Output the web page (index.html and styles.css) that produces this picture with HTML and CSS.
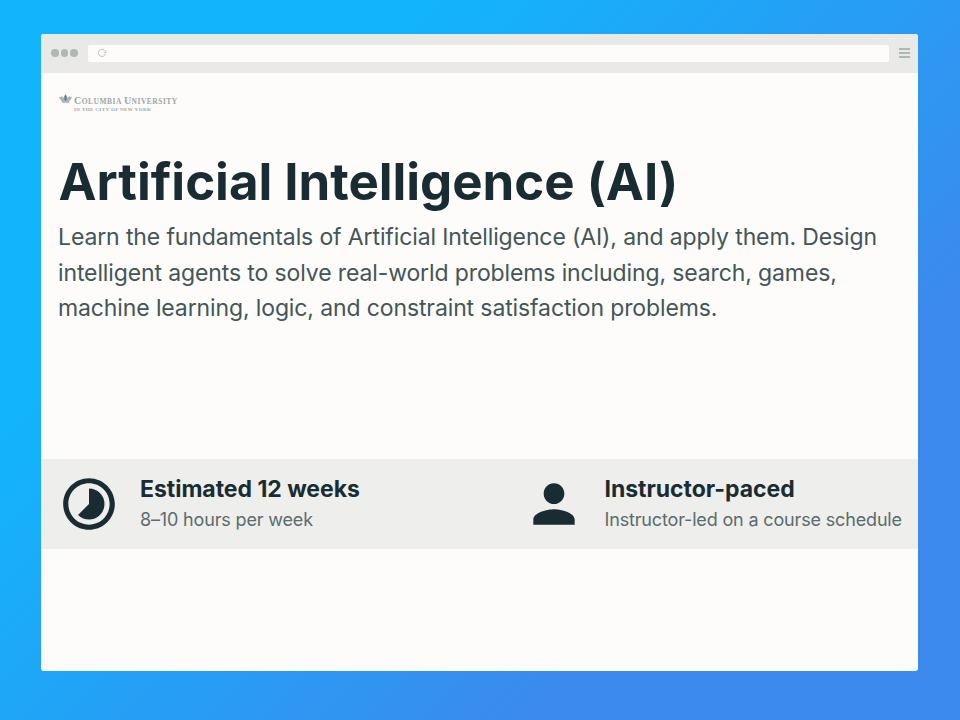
FILE: index.html
```html
<!DOCTYPE html>
<html lang="en">
<head>
<meta charset="utf-8">
<title>Artificial Intelligence (AI)</title>
<link rel="stylesheet" href="styles.css">
</head>
<body>
<main class="window">
  <header class="toolbar">
    <div class="dots"><i></i><i></i><i></i></div>
    <div class="address">
      <svg class="reload" viewBox="0 0 10 10"><path d="M7.600 2.300A3.600 3.600 0 1 0 8.500 5.800M8.800 2.600v2H6.800"/></svg>
    </div>
    <div class="menu"><i></i><i></i><i></i></div>
  </header>
  <section class="hero">
    <div class="brand">
      <svg class="crown" viewBox="0 0 14 11"><path class="crown-side" d="M0 2.500l2 .3.8-1 1.700 1.700L6 2h2l1.500 1.500L11.200 1.800l.8 1 2-.3-1 2.500-1.500 1.500L10.500 9h-7L2.500 6.500 1 5z"/><path class="crown-mid" d="M6.500 0h1v1.500h1v1h-1L8.500 5 7 7 5.500 5l1-2.500h-1v-1h1z"/></svg>
      <div class="brand-text">
        <div class="brand-name"><b>C</b>OLUMBIA <b>U</b>NIVERSITY</div>
        <div class="brand-city">IN THE CITY OF NEW YORK</div>
      </div>
    </div>
    <h1 class="title">Artificial Intelligence (AI)</h1>
    <p class="lead"><span class="line">Learn the fundamentals of Artificial Intelligence (AI), and apply them. Design</span> <span class="line">intelligent agents to solve real-world problems including, search, games,</span> <span class="line">machine learning, logic, and constraint satisfaction problems.</span></p>
  </section>
  <section class="facts">
    <div class="fact">
      <svg class="icon" viewBox="0 0 24 24"><path d="M16.240 7.750A5.974 5.974 0 0 0 12 5.990v6l-4.240 4.240c2.340 2.340 6.140 2.340 8.490 0a5.990 5.990 0 0 0-.01-8.480zM12 1.990c-5.520 0-10 4.480-10 10s4.480 10 10 10 10-4.480 10-10-4.480-10-10-10zm0 18c-4.420 0-8-3.580-8-8s3.580-8 8-8 8 3.580 8 8-3.580 8-8 8z"/></svg>
      <div><h2 class="fact-title">Estimated 12 weeks</h2><p class="fact-note">8–10 hours per week</p></div>
    </div>
    <div class="fact">
      <svg class="icon" viewBox="0 0 24 24"><path d="M12 12c2.210 0 4-1.790 4-4s-1.790-4-4-4-4 1.790-4 4 1.790 4 4 4zm0 2c-2.670 0-8 1.340-8 4v2h16v-2c0-2.660-5.330-4-8-4z"/></svg>
      <div><h2 class="fact-title">Instructor-paced</h2><p class="fact-note">Instructor-led on a course schedule</p></div>
    </div>
  </section>
</main>
</body>
</html>
```
FILE: styles.css
```css
* { box-sizing: border-box; }
body {
  margin: 0;
  width: 960px;
  height: 720px;
  padding: 34px 42px 49px 41px;
  overflow: hidden;
  background: linear-gradient(135deg, #12b4fc 26%, #289cf4 54%, #3c8aee 74%);
  font-family: Inter, "Liberation Sans", sans-serif;
  color: #182c32;
}
h1, h2, p { margin: 0; font-weight: normal; }
.window {
  height: 637px;
  border-radius: 3px;
  overflow: hidden;
  background: #fdfcfa;
}
.toolbar {
  display: flex;
  align-items: center;
  height: 39px;
  padding: 0 8px 1px 10px;
  background: #e9eae8;
}
.dots { display: flex; gap: 2px; width: 37px; }
.dots i { width: 7.500px; height: 7.500px; border-radius: 50%; background: #b0b8b6; }
.address {
  display: flex;
  align-items: center;
  width: 801px;
  height: 17px;
  padding-left: 9px;
  border-radius: 2px;
  background: #fdfcfa;
}
.reload { width: 10px; height: 10px; fill: none; stroke: #b8c0be; stroke-width: 1; }
.menu { display: grid; gap: 2px; width: 11px; margin-left: 10px; }
.menu i { height: 2px; background: #b0b8b6; }
.hero { height: 386px; padding: 21px 18px 0; }
.brand { display: flex; gap: 2px; height: 22px; }
.crown { width: 13px; height: 11px; }
.crown-side { fill: #a9b4b5; }
.crown-mid { fill: #5d7c9c; }
.brand-text { padding-top: 2px; font-family: "Liberation Serif", serif; color: #9ba6a7; white-space: nowrap; }
.brand-name { font-size: 7.500px; line-height: 10px; font-weight: bold; letter-spacing: 0.5px; }
.brand-name b { font-size: 10px; }
.brand-city { font-size: 5px; line-height: 6px; font-weight: bold; letter-spacing: 0.4px; }
.title {
  margin-top: 35px;
  margin-left: -0.5px;
  font-size: 51px;
  line-height: 62px;
  font-weight: 700;
  letter-spacing: -0.04px;
  white-space: nowrap;
}
.lead {
  margin-top: 7px;
  margin-left: -1px;
  font-size: 23px;
  line-height: 35.500px;
  letter-spacing: -0.12px;
  color: #445558;
  white-space: nowrap;
}
.line { display: block; }
.facts {
  display: grid;
  grid-template-columns: 464.500px 1fr;
  height: 90px;
  background: #eeeeec;
}
.fact { display: flex; padding: 14px 0 0 17px; white-space: nowrap; }
.icon { flex: none; width: 62px; height: 62px; margin-right: 20px; fill: #182c32; }
.fact-title { font-size: 23px; line-height: 32px; font-weight: 700; letter-spacing: -0.03px; }
.fact-note { font-size: 18px; line-height: 30px; letter-spacing: -0.16px; color: #5c6b6d; }
```
